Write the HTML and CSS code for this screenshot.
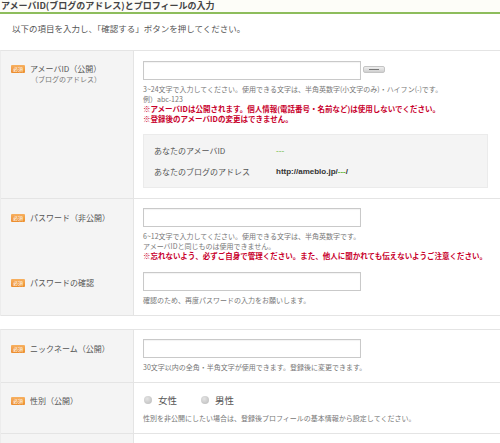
FILE: index.html
```html
<!DOCTYPE html>
<html lang="ja">
<head>
<meta charset="utf-8">
<link rel="stylesheet" href="styles.css">
</head>
<body>
<div class="page">
  <h1 class="title">アメーバID(ブログのアドレス)とプロフィールの入力</h1>
  <p class="lead">以下の項目を入力し、「確認する」ボタンを押してください。</p>

  <div class="form">
    <div class="row">
      <div class="lab lab-id">
        <div class="lab-main"><span class="badge">必須</span>アメーバID（公開）</div>
        <div class="lab-sub">（ブログのアドレス）</div>
      </div>
      <div class="cell cell-id">
        <div class="field-line"><span class="input"></span><span class="mini-btn"><span></span></span></div>
        <p class="help first">3~24文字で入力してください。使用できる文字は、半角英数字(小文字のみ)・ハイフン(-)です。</p>
        <p class="help">例）abc-123</p>
        <p class="warn">※アメーバIDは公開されます。個人情報(電話番号・名前など)は使用しないでください。</p>
        <p class="warn">※登録後のアメーバIDの変更はできません。</p>
        <div class="preview">
          <div class="pv-row"><span class="pv-lab">あなたのアメーバID</span><span class="pv-val green">---</span></div>
          <div class="pv-row"><span class="pv-lab">あなたのブログのアドレス</span><span class="pv-val url">http://ameblo.jp/<span class="green">---</span>/</span></div>
        </div>
      </div>
    </div>

    <div class="row group">
      <div class="sub sub-a">
        <div class="lab"><div class="lab-main tall"><span class="badge">必須</span>パスワード（非公開）</div></div>
        <div class="cell">
          <span class="input"></span>
          <p class="help first">6~12文字で入力してください。使用できる文字は、半角英数字です。</p>
          <p class="help">アメーバIDと同じものは使用できません。</p>
          <p class="warn">※忘れないよう、必ずご自身で管理ください。また、他人に聞かれても伝えないようご注意ください。</p>
        </div>
      </div>
      <div class="sub sub-b">
        <div class="lab"><div class="lab-main tall"><span class="badge">必須</span>パスワードの確認</div></div>
        <div class="cell">
          <span class="input"></span>
          <p class="help first">確認のため、再度パスワードの入力をお願いします。</p>
        </div>
      </div>
    </div>
  </div>

  <div class="form form2">
    <div class="row">
      <div class="lab"><div class="lab-main tall"><span class="badge">必須</span>ニックネーム（公開）</div></div>
      <div class="cell">
        <span class="input"></span>
        <p class="help first">30文字以内の全角・半角文字が使用できます。登録後に変更できます。</p>
      </div>
    </div>
    <div class="row">
      <div class="lab"><div class="lab-main radio-lab"><span class="badge">必須</span>性別（公開）</div></div>
      <div class="cell">
        <div class="radios"><span class="radio"><i></i>女性</span><span class="radio"><i></i>男性</span></div>
        <p class="help after-radio">性別を非公開にしたい場合は、登録後プロフィールの基本情報から設定してください。</p>
      </div>
    </div>
    <div class="row last">
      <div class="lab"></div>
      <div class="cell"></div>
    </div>
  </div>
</div>
</body>
</html>
```

FILE: styles.css
```css
* { box-sizing: border-box; }
html, body { margin: 0; padding: 0; background: #fff; }
body {
  font-family: "Noto Sans CJK JP", "Noto Sans", sans-serif;
  color: #555;
  width: 500px;
  height: 443px;
  overflow: hidden;
}
.title {
  margin: 0;
  font-size: 9px;
  line-height: 12px;
  font-weight: bold;
  color: #444;
  background: #fdfdf8;
  border-bottom: 2px solid #8dbd5c;
  padding-left: 1px;
}
.lead {
  margin: 0;
  padding: 8px 0 0 12px;
  height: 36px;
  font-size: 8.5px;
  line-height: 12px;
  color: #555;
}
.form {
  border-top: 1px solid #e4e4e4;
  border-left: 1px solid #ececec;
}
.form2 { margin-top: 13px; }
.row {
  display: grid;
  grid-template-columns: 133px 1fr;
  border-bottom: 1px solid #e4e4e4;
}
.row.group { display: block; }
.sub {
  display: grid;
  grid-template-columns: 133px 1fr;
}
.lab {
  background: #f4f4f4;
  border-right: 1px solid #e4e4e4;
  padding-left: 10px;
}
.cell {
  padding: 9px 0 10px 9px;
}
.cell-id { padding-top: 10px; }
.lab-id { padding-top: 12px; }
.lab-main {
  font-size: 8px;
  line-height: 11px;
  color: #555;
  display: flex;
  align-items: center;
  white-space: nowrap;
}
.lab-main.tall { padding-top: 9px; line-height: 19px; }
.lab-main.radio-lab { padding-top: 11px; line-height: 14px; }
.lab-sub {
  font-size: 7px;
  line-height: 10px;
  color: #777;
  padding-left: 20px;
}
.badge {
  display: inline-block;
  width: 14px;
  height: 8px;
  background: linear-gradient(#f7b060, #ec8d2c);
  color: #fff;
  font-size: 5px;
  line-height: 8px;
  text-align: center;
  margin-right: 5px;
  border-radius: 1px;
}
.field-line { display: flex; align-items: center; }
.input {
  display: block;
  width: 218px;
  height: 19px;
  border: 1px solid #c9c9c9;
  background: #fff;
  box-shadow: inset 0 1px 1px rgba(0,0,0,0.05);
}
.mini-btn {
  display: flex;
  align-items: center;
  justify-content: center;
  width: 22px;
  height: 7px;
  margin-left: 2px;
  margin-top: -2px;
  background: linear-gradient(#eeeeee, #cfcfcf);
  border: 1px solid #c4c4c4;
  border-radius: 2px;
}
.mini-btn span { display: block; width: 10px; height: 1px; background: #777; }
.help {
  margin: 0;
  font-size: 7px;
  line-height: 10px;
  color: #777;
  white-space: nowrap;
}
.help.first { margin-top: 4px; }
.help.after-radio { margin-top: 6px; }
.warn {
  margin: 0;
  font-size: 7.5px;
  line-height: 10px;
  font-weight: bold;
  color: #c8002c;
  white-space: nowrap;
}
.sub-a .cell { padding-bottom: 11px; }
.sub-b .cell { padding-top: 0; }
.sub-b .lab-main.tall { padding-top: 1px; }
.preview {
  margin-top: 10px;
  margin-right: 12px;
  background: #f4f4f4;
  border: 1px solid #ebebeb;
  padding: 9px 10px;
  display: flex;
  flex-direction: column;
  gap: 8px;
}
.pv-row {
  display: flex;
  align-items: center;
  height: 13px;
  font-size: 8px;
  color: #555;
}
.pv-lab { width: 122px; }
.pv-val.url {
  font-family: "Liberation Sans", Arial, sans-serif;
  font-weight: bold;
  font-size: 8px;
  color: #333;
}
.green { color: #5fb52e; }
.radios {
  display: flex;
  align-items: center;
  height: 14px;
  margin-top: 1px;
  font-size: 9.5px;
  color: #555;
}
.radio { display: flex; align-items: center; margin-right: 23px; }
.radio i {
  display: inline-block;
  width: 8px;
  height: 8px;
  border-radius: 50%;
  background: radial-gradient(circle at 40% 35%, #e4e4e4, #b9b9b9);
  margin-right: 6px;
  margin-left: 1px;
}
.row.last { border-bottom: none; height: 20px; }
```
